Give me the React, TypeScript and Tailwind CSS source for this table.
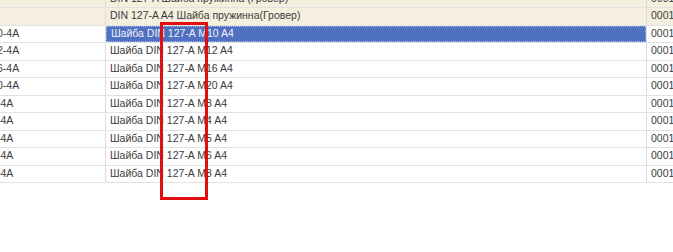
const rows: { left: string; name: string; code: string; group?: boolean; selected?: boolean }[] = [
  { left: "", name: "DIN 127-A Шайба пружинна (Гровер)", code: "0001", group: true },
  { left: "", name: "DIN 127-A A4 Шайба пружинна(Гровер)", code: "0001", group: true },
  { left: "0-4А", name: "Шайба DIN 127-A M10 A4", code: "0001", selected: true },
  { left: "2-4А", name: "Шайба DIN 127-A M12 A4", code: "0001" },
  { left: "6-4А", name: "Шайба DIN 127-A M16 A4", code: "0001" },
  { left: "0-4А", name: "Шайба DIN 127-A M20 A4", code: "0001" },
  { left: "-4А", name: "Шайба DIN 127-A M8 A4", code: "0001" },
  { left: "-4А", name: "Шайба DIN 127-A M4 A4", code: "0001" },
  { left: "-4А", name: "Шайба DIN 127-A M5 A4", code: "0001" },
  { left: "-4А", name: "Шайба DIN 127-A M6 A4", code: "0001" },
  { left: "-4А", name: "Шайба DIN 127-A M8 A4", code: "0001" },
];

export default function App() {
  return (
    <div className="relative w-[673px] h-[252px] overflow-hidden bg-white text-[10.5px] text-[#3c3c3c] font-['Liberation_Sans',Arial,sans-serif]">
      <div className="-mt-[9.5px]">
        {rows.map((r, i) => (
          <div
            key={i}
            className={`flex h-[17.5px] border-b border-[#e2e2e2] ${r.group ? "bg-[#f4efdf]" : "bg-white"}`}
          >
            <div className="w-[106px] shrink-0 border-r border-[#dcdcdc] flex items-center overflow-hidden whitespace-nowrap">
              <span className="-ml-[3px]">{r.left}</span>
            </div>
            <div
              className={`w-[540px] shrink-0 flex items-center pl-[4px] whitespace-nowrap overflow-hidden ${
                r.selected ? "bg-[#5070c0] text-[#eef1fa] border border-dotted border-[#a9b9e6]" : ""
              }`}
            >
              {r.name}
            </div>
            <div className="flex-1 border-l border-[#d3dbe6] flex items-center pl-[4px] whitespace-nowrap overflow-hidden">
              {r.code}
            </div>
          </div>
        ))}
      </div>
      <div className="absolute left-[160px] top-[22px] w-[48px] h-[178px] border-[3px] border-[#e01010]" />
    </div>
  );
}
